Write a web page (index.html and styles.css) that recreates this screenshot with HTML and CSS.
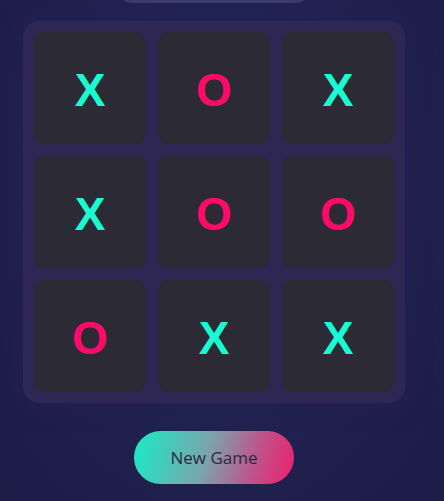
FILE: index.html
```html
<!DOCTYPE html>
<html>
<head>
<meta charset="utf-8">
<link rel="stylesheet" href="styles.css">
</head>
<body>
<div class="page">
  <div class="status"></div>
  <div class="board">
    <div class="cell x">X</div>
    <div class="cell o">O</div>
    <div class="cell x">X</div>
    <div class="cell x">X</div>
    <div class="cell o">O</div>
    <div class="cell o">O</div>
    <div class="cell o">O</div>
    <div class="cell x">X</div>
    <div class="cell x">X</div>
  </div>
  <button class="new-game">New Game</button>
</div>
</body>
</html>
```
FILE: styles.css
```css
html, body {
  margin: 0;
  padding: 0;
  height: 100%;
}
body {
  background: radial-gradient(ellipse at 50% 35%, #22285a 0%, #20224f 55%, #1e1b47 100%);
  background-color: #1f1f4c;
  overflow: hidden;
  font-family: "Open Sans", "Noto Sans", sans-serif;
}
.page {
  width: 428px;
  display: flex;
  flex-direction: column;
  align-items: center;
}
.status {
  width: 192px;
  height: 24px;
  margin-top: -21px;
  border-radius: 0 0 14px 14px;
  background: #3b3d6a;
}
.board {
  margin-top: 18px;
  width: 360px;
  padding: 11px;
  display: grid;
  grid-template-columns: repeat(3, 112px);
  grid-template-rows: repeat(3, 112px);
  gap: 12px;
  background: #2e2753;
  border-radius: 16px;
  box-shadow: 0 0 24px rgba(40, 30, 90, 0.5);
}
.cell {
  background: #2c2b35;
  border-radius: 10px;
  display: flex;
  align-items: center;
  justify-content: center;
  padding-top: 3px;
  box-sizing: border-box;
  font-family: "Liberation Sans", Arial, sans-serif;
  font-weight: bold;
  font-size: 46px;
}
.cell.x { color: #19fbd3; }
.cell.o { color: #ff0a6b; }
.new-game {
  margin-top: 28px;
  width: 160px;
  height: 53px;
  border: none;
  border-radius: 27px;
  background: linear-gradient(105deg, #17ecc6 0%, #7aa5ae 45%, #c0528a 75%, #ee1f6e 100%);
  color: #2a2940;
  font-family: "Open Sans", "Noto Sans", sans-serif;
  font-size: 17px;
  padding: 0;
}
```
